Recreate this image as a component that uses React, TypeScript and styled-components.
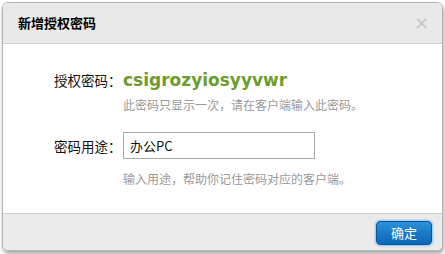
import { createGlobalStyle } from "styled-components";
import styled from "styled-components";

const GlobalStyle = createGlobalStyle`
  html, body {
    margin: 0;
    padding: 0;
    background: #ffffff;
  }

  body {
    font-family: "Liberation Sans", "Noto Sans CJK SC", sans-serif;
    color: #222;
  }
`;

const Page = styled.div`
  width: 445px;
  height: 254px;
  padding: 2px 0 0 2px;
  box-sizing: border-box;
`;

const Dialog = styled.div`
  width: 441px;
  height: 249px;
  box-sizing: border-box;
  border: 1px solid #b4b4b4;
  border-radius: 6px;
  overflow: hidden;
  display: flex;
  flex-direction: column;
  box-shadow: 1px 3px 4px rgba(0, 0, 0, 0.35);
  background: #fff;
`;

const Header = styled.div`
  height: 40px;
  flex: none;
  display: flex;
  align-items: center;
  justify-content: space-between;
  padding: 0 13px 0 15px;
  background: #e9e9e9;
  border-bottom: 1px solid #cfcfcf;
`;

const Title = styled.h3`
  margin: 0;
  font-family: "Noto Sans CJK SC", sans-serif;
  font-size: 13px;
  font-weight: 700;
  color: #000;
  line-height: 20px;
`;

const Close = styled.span`
  font-family: "DejaVu Sans", sans-serif;
  font-size: 18px;
  line-height: 20px;
  color: #c4c4c4;
`;

const Body = styled.div`
  flex: 1;
  padding: 24px 0 0 51px;
  display: flex;
  flex-direction: column;
`;

const Row = styled.div<{ $height: number; $gap?: number }>`
  display: flex;
  align-items: center;
  height: ${(p) => p.$height}px;
  margin-top: ${(p) => p.$gap ?? 0}px;
`;

const Label = styled.label`
  width: 69px;
  flex: none;
  font-family: "Noto Sans CJK SC", sans-serif;
  font-size: 13.5px;
  color: #111;
`;

const Secret = styled.span`
  font-family: "DejaVu Sans", Verdana, sans-serif;
  font-weight: 700;
  font-size: 17px;
  color: #6c9d2c;
`;

const Hint = styled.div<{ $gap: number }>`
  margin: ${(p) => p.$gap}px 0 0 69px;
  font-family: "Noto Sans CJK SC", sans-serif;
  font-size: 12px;
  line-height: 18px;
  color: #999;
`;

const Input = styled.input`
  width: 192px;
  height: 27px;
  box-sizing: border-box;
  border: 1px solid #a9a9a9;
  padding: 0 6px;
  font-family: "Noto Sans CJK SC", sans-serif;
  font-size: 13px;
  color: #111;
  outline: none;
`;

const Footer = styled.div`
  height: 36px;
  flex: none;
  display: flex;
  align-items: center;
  justify-content: flex-end;
  padding: 0 10px 0 0;
  background: #ebebeb;
  border-top: 1px solid #cdcdcd;
`;

const PrimaryButton = styled.button`
  width: 56px;
  height: 24px;
  box-sizing: border-box;
  border: 1px solid #0b5597;
  border-radius: 4px;
  background: linear-gradient(to bottom, #2b8fd8, #0b66b8);
  box-shadow: 0 0 2px 1px rgba(102, 175, 233, 0.7);
  color: #fff;
  font-family: "Noto Sans CJK SC", sans-serif;
  font-size: 13px;
  line-height: 20px;
  padding: 0;
  margin-top: 2px;
  cursor: pointer;
`;

export default function App() {
  return (
    <>
      <GlobalStyle />
      <Page>
        <Dialog>
          <Header>
            <Title>新增授权密码</Title>
            <Close>×</Close>
          </Header>
          <Body>
            <Row $height={24}>
              <Label>授权密码：</Label>
              <Secret>csigrozyiosyyvwr</Secret>
            </Row>
            <Hint $gap={4}>此密码只显示一次，请在客户端输入此密码。</Hint>
            <Row $height={27} $gap={18}>
              <Label>密码用途：</Label>
              <Input defaultValue="办公PC" />
            </Row>
            <Hint $gap={11}>输入用途，帮助你记住密码对应的客户端。</Hint>
          </Body>
          <Footer>
            <PrimaryButton>确定</PrimaryButton>
          </Footer>
        </Dialog>
      </Page>
    </>
  );
}
